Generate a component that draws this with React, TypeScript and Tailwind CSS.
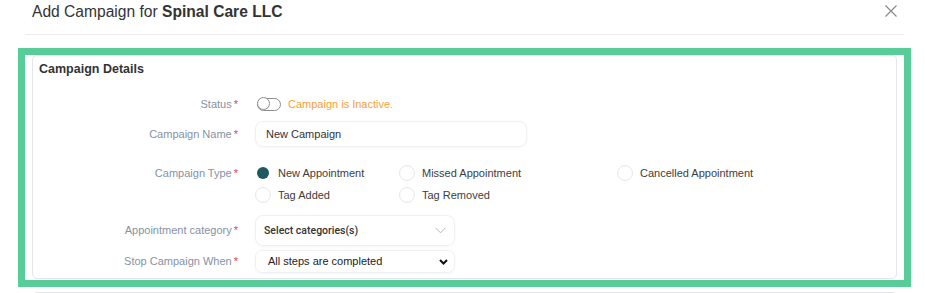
import React from "react";

const Label = ({ text }: { text: string }) => (
  <div className="w-[206px] shrink-0 pr-px text-right text-[11px] text-[#8791a3]">
    {text}
    <span className="ml-[2px] text-[#e8435b]">*</span>
  </div>
);

const Radio = ({ label, checked }: { label: string; checked?: boolean }) => (
  <div className="flex h-[22px] items-center">
    <div className="flex w-[16px] shrink-0 items-center justify-center">
      {checked ? (
        <div className="h-[12px] w-[12px] rounded-full bg-[#1e5862]" />
      ) : (
        <div className="h-[16px] w-[16px] rounded-full border border-[#e4e7eb] bg-white" />
      )}
    </div>
    <span className="ml-[7px] text-[11px] text-[#3d3d3d]">{label}</span>
  </div>
);

export default function App() {
  return (
    <div className="h-[293px] w-[925px] overflow-hidden bg-white font-['Liberation_Sans',Arial,sans-serif]">
      <div className="ml-[18px] w-[893px]">
        {/* header */}
        <div className="mx-[7px] flex h-[35px] items-start justify-between border-b border-[#ececec] px-[7px] pt-[3px]">
          <div className="text-[15.6px] leading-[18px] text-[#333]">
            Add Campaign for <span className="font-bold">Spinal Care LLC</span>
          </div>
          <svg width="12" height="12" viewBox="0 0 12 12" className="mt-[2px]">
            <path d="M0.5 0.5 L11.5 11.5 M11.5 0.5 L0.5 11.5" stroke="#8a8a8a" strokeWidth="1.2" fill="none" />
          </svg>
        </div>

        {/* highlighted section */}
        <div className="mt-[13px] border-[7px] border-[#58cd99] px-[7px] pb-px">
          <div className="rounded-[5px] border border-[#e3e6ea] bg-white pb-[5px]">
            <div className="pl-[6px] pt-[5px] text-[12.5px] font-bold leading-[16px] text-[#333]">
              Campaign Details
            </div>

            {/* status */}
            <div className="mt-[17px] flex h-[20px] items-center">
              <Label text="Status" />
              <div className="ml-[18px] flex items-center">
                <div className="relative h-[13px] w-[24px] rounded-full border-[1.5px] border-[#8e8e8e]">
                  <div className="absolute -left-[1.5px] -top-[1.5px] h-[13px] w-[13px] rounded-full border-[1.5px] border-[#8e8e8e] bg-white" />
                </div>
                <span className="ml-[7px] text-[11px] text-[#f7a13c]">Campaign is Inactive.</span>
              </div>
            </div>

            {/* name */}
            <div className="mt-[7px] flex items-center">
              <Label text="Campaign Name" />
              <div className="ml-[16px] flex h-[26px] w-[272px] items-center rounded-[8px] border border-[#eef0f3] pl-[10px] text-[11px] text-[#333] shadow-[0_1px_3px_rgba(0,0,0,0.04)]">
                New Campaign
              </div>
            </div>

            {/* type */}
            <div className="mt-[15px] flex items-start">
              <div className="flex h-[22px] items-center">
                <Label text="Campaign Type" />
              </div>
              <div className="ml-[16px] grid grid-cols-[144px_218px_auto]">
                <Radio label="New Appointment" checked />
                <Radio label="Missed Appointment" />
                <Radio label="Cancelled Appointment" />
                <Radio label="Tag Added" />
                <Radio label="Tag Removed" />
              </div>
            </div>

            {/* category */}
            <div className="mt-[9px] flex items-center">
              <Label text="Appointment category" />
              <div className="ml-[16px] flex h-[31px] w-[200px] items-center justify-between rounded-[8px] border border-[#eef0f3] pl-[8px] pr-[8px] shadow-[0_1px_3px_rgba(0,0,0,0.04)]">
                <span className="font-['Roboto',Arial,sans-serif] text-[10.5px] font-medium text-[#333]">
                  Select categories(s)
                </span>
                <svg width="11" height="7" viewBox="0 0 11 7">
                  <path d="M0.5 0.8 L5.5 5.8 L10.5 0.8" stroke="#b3b7bd" strokeWidth="1" fill="none" />
                </svg>
              </div>
            </div>

            {/* stop */}
            <div className="mt-[4px] flex items-center">
              <Label text="Stop Campaign When" />
              <div className="ml-[16px] flex h-[23px] w-[200px] items-center justify-between rounded-[7px] border border-[#eef0f3] pl-[12px] pr-[6px] shadow-[0_1px_3px_rgba(0,0,0,0.04)]">
                <span className="text-[11px] text-[#222]">All steps are completed</span>
                <svg width="9" height="6" viewBox="0 0 9 6">
                  <path d="M1 1 L4.5 4.5 L8 1" stroke="#111" strokeWidth="2" fill="none" />
                </svg>
              </div>
            </div>
          </div>
        </div>

        {/* next card */}
        <div className="mx-[14px] mt-[5px] h-[20px] rounded-t-[5px] border-x border-t border-[#e3e6ea]" />
      </div>
    </div>
  );
}
